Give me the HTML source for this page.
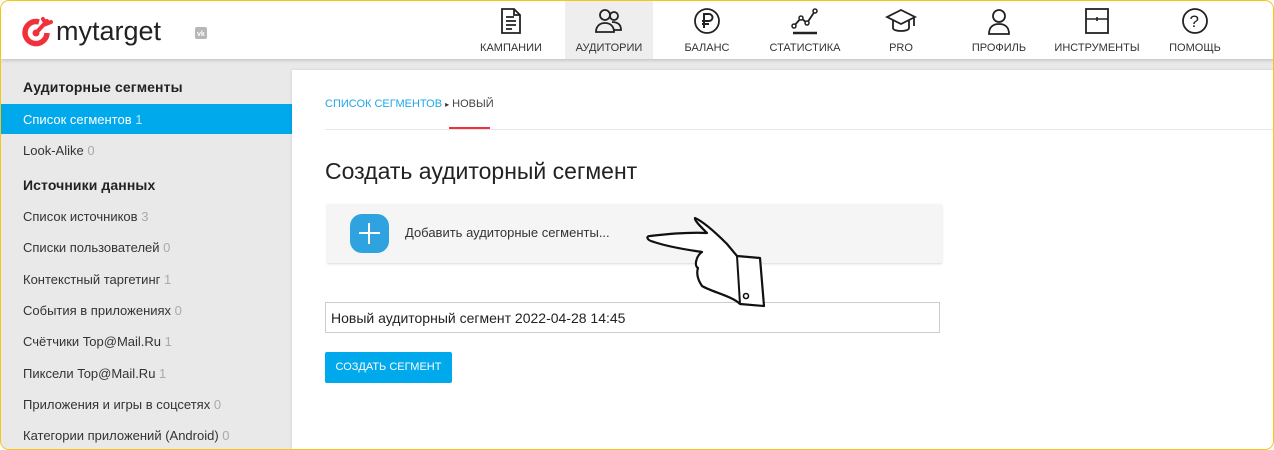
<!DOCTYPE html>
<html><head><meta charset="utf-8"><style>
*{box-sizing:border-box;margin:0;padding:0}
html,body{width:1274px;height:450px;overflow:hidden;background:#fff;font-family:"Liberation Sans","Noto Sans CJK SC",sans-serif}
.frame{position:absolute;left:0;top:0;width:1274px;height:450px;border:1.5px solid #f5c518;border-radius:9px;overflow:hidden;background:#e9e9e9}
.hdr{position:absolute;left:0;top:0;width:1274px;height:58px;background:#fff;box-shadow:0 1px 4px rgba(0,0,0,.2);z-index:2}
.logo{position:absolute;left:20px;top:12px}
.nav{position:absolute;top:0;height:58px;text-align:center;font-size:11px;color:#333}
.nav svg{position:absolute;top:5px;left:50%;transform:translateX(-50%)}
.nav span{position:absolute;top:41px;left:0;right:0;white-space:nowrap}
.side{position:absolute;left:0;top:58px;width:291px;height:392px;background:#e9e9e9}
.it{position:absolute;left:22px;font-size:13px;color:#333;white-space:nowrap}
.it b{font-weight:normal;color:#aaa}
.h{font-size:14px;color:#222;font-weight:bold;letter-spacing:.1px}
.act{position:absolute;left:0;top:45px;width:291px;height:30px;background:#00a8ec}
.main{position:absolute;left:291px;top:69px;width:990px;height:390px;background:#fff;box-shadow:0 0 3px rgba(0,0,0,.12)}
</style></head><body><div class="frame">
<div class="hdr">
 <svg class="logo" width="190" height="34" viewBox="0 0 190 34">
  <path d="M18 9 A11 11 0 1 0 26 20" fill="none" stroke="#f0313c" stroke-width="5.5"/>
  <circle cx="15" cy="20" r="3.5" fill="#f0313c"/>
  <path d="M15 20 L26 8 M22 6 L25 11 L30 9" stroke="#f0313c" stroke-width="4" fill="none" stroke-linecap="round"/>
  <text x="35" y="27" font-family="Liberation Sans" font-size="27" fill="#222">mytarget</text>
  <rect x="174" y="14" width="12" height="12" rx="2" fill="#b7b7b7"/>
  <text x="176" y="23" font-size="7" fill="#fff" font-weight="bold">vk</text>
 </svg>
 <div class="nav" style="left:470px;width:80px"><svg width="26" height="30" viewBox="0 0 26 30"><path d="M4 3h12l6 6v18H4z M16 3v6h6 M8 11h8 M8 15h10 M8 19h10 M8 23h6" fill="none" stroke="#222" stroke-width="1.8"/></svg><span>КАМПАНИИ</span></div>
 <div class="nav" style="left:564px;width:88px;background:#eee"><svg width="30" height="30" viewBox="0 0 30 30"><circle cx="11" cy="9" r="5" fill="none" stroke="#222" stroke-width="1.8"/><circle cx="20" cy="10" r="4" fill="none" stroke="#222" stroke-width="1.8"/><path d="M2 26c0-6 4-9 9-9s9 3 9 9z M18 16c5 0 9 2 9 8h-7" fill="none" stroke="#222" stroke-width="1.8"/></svg><span>АУДИТОРИИ</span></div>
 <div class="nav" style="left:666px;width:80px"><svg width="30" height="30" viewBox="0 0 30 30"><circle cx="15" cy="15" r="12" fill="none" stroke="#222" stroke-width="1.8"/><path d="M12 22V8h5a3.5 3.5 0 0 1 0 7h-7 M10 18h7" fill="none" stroke="#222" stroke-width="2"/></svg><span>БАЛАНС</span></div>
 <div class="nav" style="left:758px;width:92px"><svg width="30" height="30" viewBox="0 0 30 30"><path d="M4 20l7-8 6 5 8-12" fill="none" stroke="#222" stroke-width="1.8"/><circle cx="4" cy="20" r="2" fill="#fff" stroke="#222" stroke-width="1.5"/><circle cx="11" cy="12" r="2" fill="#fff" stroke="#222" stroke-width="1.5"/><circle cx="17" cy="17" r="2" fill="#fff" stroke="#222" stroke-width="1.5"/><circle cx="25" cy="5" r="2" fill="#fff" stroke="#222" stroke-width="1.5"/><path d="M3 27h24" stroke="#222" stroke-width="2.5"/></svg><span>СТАТИСТИКА</span></div>
 <div class="nav" style="left:860px;width:80px"><svg width="32" height="30" viewBox="0 0 32 30"><path d="M2 11l14-7 14 7-14 7z M8 14v8c0 4 16 4 16 0v-8 M29 12v8" fill="none" stroke="#222" stroke-width="1.8"/></svg><span>PRO</span></div>
 <div class="nav" style="left:958px;width:80px"><svg width="28" height="30" viewBox="0 0 28 30"><circle cx="14" cy="10" r="6" fill="none" stroke="#222" stroke-width="1.8"/><path d="M4 28c0-7 4-10 10-10s10 3 10 10z" fill="none" stroke="#222" stroke-width="1.8"/></svg><span>ПРОФИЛЬ</span></div>
 <div class="nav" style="left:1052px;width:88px"><svg width="28" height="30" viewBox="0 0 28 30"><rect x="3" y="3" width="22" height="24" fill="none" stroke="#222" stroke-width="1.8"/><path d="M3 13h22 M14 11v4" stroke="#222" stroke-width="1.6"/></svg><span>ИНСТРУМЕНТЫ</span></div>
 <div class="nav" style="left:1154px;width:80px"><svg width="30" height="30" viewBox="0 0 30 30"><circle cx="15" cy="15" r="12" fill="none" stroke="#222" stroke-width="1.8"/><text x="9.5" y="21" font-size="17" fill="#222">?</text></svg><span>ПОМОЩЬ</span></div>
</div>
<div class="side">
 <div class="act"></div>
 <div class="it h" style="top:20px">Аудиторные сегменты</div>
 <div class="it" style="top:53px;color:#fff">Список сегментов <b style="color:#bfe6fb">1</b></div>
 <div class="it" style="top:84px">Look-Alike <b>0</b></div>
 <div class="it h" style="top:118px">Источники данных</div>
 <div class="it" style="top:150px">Список источников <b>3</b></div>
 <div class="it" style="top:181px">Списки пользователей <b>0</b></div>
 <div class="it" style="top:213px">Контекстный таргетинг <b>1</b></div>
 <div class="it" style="top:244px">События в приложениях <b>0</b></div>
 <div class="it" style="top:275px">Счётчики Top@Mail.Ru <b>1</b></div>
 <div class="it" style="top:307px">Пиксели Top@Mail.Ru <b>1</b></div>
 <div class="it" style="top:338px">Приложения и игры в соцсетях <b>0</b></div>
 <div class="it" style="top:369px">Категории приложений (Android) <b>0</b></div>
</div>
<div class="main">
 <div style="position:absolute;left:33px;top:28px;font-size:11px;color:#1ea7e8">СПИСОК СЕГМЕНТОВ <span style="color:#333;font-size:8px">▸</span> <span style="color:#444">НОВЫЙ</span></div>
 <div style="position:absolute;left:33px;top:59px;width:960px;height:1px;background:#e6e6e6"></div>
 <div style="position:absolute;left:157px;top:57px;width:41px;height:2px;background:#f0313c"></div>
 <div style="position:absolute;left:33px;top:88px;font-size:23px;color:#222">Создать аудиторный сегмент</div>
 <div style="position:absolute;left:35px;top:134px;width:615px;height:59px;background:#f5f5f5;box-shadow:0 1px 2px rgba(0,0,0,.15)"></div>
 <div style="position:absolute;left:58px;top:144px;width:39px;height:39px;border-radius:12px;background:#2ea3e0"></div>
 <div style="position:absolute;left:67px;top:162px;width:21px;height:2px;background:#fff"></div>
 <div style="position:absolute;left:76px;top:153px;width:2px;height:21px;background:#fff"></div>
 <div style="position:absolute;left:113px;top:155px;font-size:13px;color:#333">Добавить аудиторные сегменты...</div>
 <div style="position:absolute;left:33px;top:232px;width:615px;height:31px;border:1px solid #ccc;font-size:14px;color:#222;padding:7px 5px">Новый аудиторный сегмент 2022-04-28 14:45</div>
 <div style="position:absolute;left:33px;top:282px;width:127px;height:31px;background:#00a8ec;border-radius:2px;color:#fff;font-size:11px;text-align:center;line-height:31px">СОЗДАТЬ СЕГМЕНТ</div>
 <svg style="position:absolute;left:340px;top:146px" width="140" height="100" viewBox="0 0 140 100">
  <path d="M18 20 C35 18 55 16 75 17 C68 10 62 4 63 2 C72 6 85 18 95 28 L105 40 L128 42 L132 90 L108 88 C100 80 80 76 70 70 C66 64 64 58 66 52 C62 50 64 40 70 36 C58 34 40 32 22 26 C14 24 14 20 18 20 Z" fill="#fff" stroke="#111" stroke-width="2.2" stroke-linejoin="round"/>
  <path d="M105 40 L108 88" stroke="#111" stroke-width="2" fill="none"/>
  <circle cx="114" cy="80" r="2.5" fill="none" stroke="#111" stroke-width="1.6"/>
 </svg>
</div>
</div></body></html>
